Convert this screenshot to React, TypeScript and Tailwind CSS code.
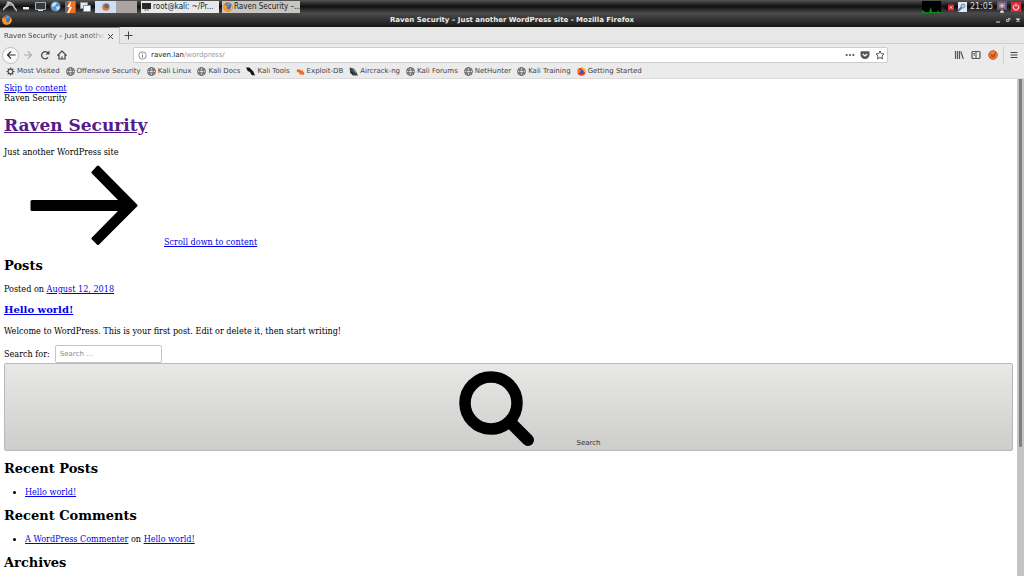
import type { ReactNode } from 'react'

const UI_FONT = "font-['DejaVu_Sans',sans-serif]"
const LINK = 'text-[#0000ee] underline'

function FirefoxIcon() {
  return (
    <svg viewBox="0 0 16 16" className="size-[10px] shrink-0">
      <circle cx="8" cy="8" r="7.5" fill="#e66a17" />
      <circle cx="8.5" cy="6.5" r="5" fill="#3f78c4" />
      <path d="M7 3q3-2 5 1q-3-1-4 1z" fill="#a8d3f5" />
      <path d="M1 4q2 1 4 1l3 2q-2 1-2 3q2 3 6 1q3-2 2-6q3 6-2 9.500q-6 3-10-1q-3-4-1-9.500z" fill="#f0962a" />
      <path d="M14 4q3 6-3 9q3-4 3-9z" fill="#ffd24a" />
    </svg>
  )
}

function GlobeIcon() {
  return (
    <svg viewBox="0 0 16 16" className="size-[9px] shrink-0" fill="none" stroke="#4c4c4c" strokeWidth="1.5">
      <circle cx="8" cy="8" r="7" />
      <ellipse cx="8" cy="8" rx="3.200" ry="7" />
      <path d="M1.500 5.500h13M1.500 10.500h13" />
    </svg>
  )
}

function GearIcon() {
  return (
    <svg viewBox="0 0 16 16" className="size-[9px] shrink-0" fill="none" stroke="#4c4c4c">
      <circle cx="8" cy="8" r="4.200" strokeWidth="2" />
      <path d="M8 1v2.500M8 12.500V15M1 8h2.500M12.500 8H15M3 3l2 2M11 11l2 2M13 3l-2 2M5 11l-2 2" strokeWidth="2" />
    </svg>
  )
}

function KaliToolsIcon() {
  return (
    <svg viewBox="0 0 16 16" className="size-[9px] shrink-0">
      <path d="M0 1l6 0l4 4l3 3l3 7l-6-1l-3-5l-4-2z" fill="#151515" />
    </svg>
  )
}

function ExploitIcon() {
  return (
    <svg viewBox="0 0 16 16" className="size-[9px] shrink-0">
      <path d="M1 5l5-1l3 2l3 0l1 3l2 1l-1 4l-4-1l-3 1l-1-4l-4-1z" fill="#ee6a22" />
    </svg>
  )
}

function AircrackIcon() {
  return (
    <svg viewBox="0 0 16 16" className="size-[9px] shrink-0">
      <path d="M1 1l8 2l4 6l3 6H7L2 10z" fill="#3a4246" />
      <path d="M6 4l5 1l2 7z" fill="#8a979b" />
      <path d="M3 9l4 1l1 4z" fill="#121616" />
    </svg>
  )
}

function QuantumIcon() {
  return (
    <svg viewBox="0 0 16 16" className="size-[9px] shrink-0">
      <circle cx="8" cy="8.500" r="7" fill="#f4352f" />
      <path d="M8 1q8 0 7.500 8q-3 1-7.500-3z" fill="#ffbd1f" />
      <circle cx="8" cy="8.500" r="4" fill="#2f55c9" />
      <path d="M1 2l6 4l-2 4L1 11z" fill="#ff7a1a" />
    </svg>
  )
}

const bookmarks: { label: string; icon: ReactNode }[] = [
  { label: 'Most Visited', icon: <GearIcon /> },
  { label: 'Offensive Security', icon: <GlobeIcon /> },
  { label: 'Kali Linux', icon: <GlobeIcon /> },
  { label: 'Kali Docs', icon: <GlobeIcon /> },
  { label: 'Kali Tools', icon: <KaliToolsIcon /> },
  { label: 'Exploit-DB', icon: <ExploitIcon /> },
  { label: 'Aircrack-ng', icon: <AircrackIcon /> },
  { label: 'Kali Forums', icon: <GlobeIcon /> },
  { label: 'NetHunter', icon: <GlobeIcon /> },
  { label: 'Kali Training', icon: <GlobeIcon /> },
  { label: 'Getting Started', icon: <QuantumIcon /> },
]

function Launchers() {
  return (
    <div className="flex items-center gap-1 pl-[3px]">
      <button aria-label="Applications">
        <svg viewBox="0 0 14 11" className="h-[11px] w-[14px]" fill="none" stroke="#b9bec2">
          <path d="M0 9q4-6 8-7M4 1q4 0 6 3q1 3 4 6" strokeWidth="1.600" />
          <path d="M2 7q4-4 9-3M3 3q3-1 6 0" strokeWidth="1" />
        </svg>
      </button>
      <button aria-label="Minimize windows">
        <svg viewBox="0 0 10 11" className="h-[11px] w-[10px]">
          <path d="M1 5h7v4H1z" fill="#111" />
          <path d="M2 6h6v2.500H2z" fill="#eee" />
        </svg>
      </button>
      <button aria-label="Terminal">
        <svg viewBox="0 0 11 11" className="size-[11px]">
          <path d="M.5 1.500h10v7H.5z" fill="#333b3f" stroke="#a6abad" />
          <path d="M3 9.500h5" stroke="#ddd" />
        </svg>
      </button>
      <button aria-label="Web browser">
        <svg viewBox="0 0 11 11" className="size-[11px]">
          <circle cx="5.500" cy="5.500" r="5" fill="#5e95cd" />
          <path d="M2 3q3-3 5-1l-2 3l-3 1zM6 6l3-1l1 2l-3 3z" fill="#c5dff4" />
        </svg>
      </button>
      <button aria-label="Burp Suite">
        <svg viewBox="0 0 11 12" className="h-3 w-[11px]">
          <path d="M0 0h11v12H0z" fill="#6e6a68" />
          <path d="M3 0h7v12H3z" fill="#f36f21" />
          <path d="M6 0L2 6h3l-3 6h2l3-6H5z" fill="#fff" />
        </svg>
      </button>
      <button aria-label="Show windows">
        <svg viewBox="0 0 11 10" className="h-[10px] w-[11px]">
          <path d="M.5.5h7v6h-7z" fill="#dfe6ec" stroke="#8b98a3" />
          <path d="M3.500 3.500h7v6h-7z" fill="#f8fafb" stroke="#7f95a9" />
        </svg>
      </button>
    </div>
  )
}

function Tray() {
  return (
    <div className="ml-auto flex items-center gap-[3px] pr-[3px] text-[8px] text-[#d8d8d8]">
      <svg viewBox="0 0 19 12" className="h-3 w-[19px]">
        <path d="M0 0h19v12H0z" fill="#000" />
        <path d="M0 12v-2l1-1l2 2h4l1-3l1-2l1 5h5l1-2l1 2h2v1z" fill="#0d8a12" />
      </svg>
      <svg viewBox="0 0 10 10" className="size-[10px]">
        <path d="M0 4h2l2-3v8L2 7H0z" fill="#111" />
        <path d="M4 2.500h6v6H4z" fill="#dc2c36" />
        <path d="M6 4.500l2 2m0-2l-2 2" stroke="#fff" strokeWidth=".8" />
      </svg>
      <svg viewBox="0 0 10 10" className="size-[10px]">
        <path d="M1 0h9v10H1z" fill="#e4e8ec" />
        <path d="M1 9l4-4" stroke="#3b6fa8" strokeWidth="2" />
        <circle cx="6" cy="4" r="2" fill="#b9d3ec" stroke="#6a8cae" />
      </svg>
      <time className={UI_FONT}>21:05</time>
      <svg viewBox="0 0 12 12" className="size-3">
        <path d="M1 0h10v9H1z" fill="#67558a" />
        <path d="M3 2h6v5H3z" fill="#8d7ba5" />
        <path d="M6 2l1 2l2 .5l-2 1l-1 2l-1-2l-2-1l2-.5z" fill="#f2c54a" />
        <path d="M4 11h4M6 9v2" stroke="#ddd" strokeWidth="1.500" />
      </svg>
      <button aria-label="Log out">
        <svg viewBox="0 0 10 10" className="size-[10px]">
          <path d="M0 0h10v10H0z" fill="#dc2c36" />
          <path d="M3.500 3a2.700 2.700 0 1 0 3 0M5 1.500v3" fill="none" stroke="#fff" />
        </svg>
      </button>
    </div>
  )
}

function Taskbar() {
  return (
    <header className="flex h-[13px] shrink-0 items-center bg-linear-to-b from-[#555] via-[#111] to-[#4a4a4a] font-['DejaVu_Sans_Condensed','DejaVu_Sans',sans-serif]">
      <Launchers />
      <div className="ml-1 flex h-3">
        <button aria-label="Workspace 1" className="flex w-[21px] items-center justify-center bg-[#cfdff5]">
          <svg viewBox="0 0 16 16" className="size-2">
            <circle cx="8" cy="8" r="7.500" fill="#e8761f" />
            <circle cx="9" cy="6" r="4.500" fill="#3c70bb" />
          </svg>
        </button>
        <button aria-label="Workspace 2" className="w-[21px] bg-[#aaa5a2]" />
      </div>
      <button className="ml-1 flex h-3 w-[78px] items-center gap-[2px] bg-[#e9e8e7] pl-px text-[8px] whitespace-nowrap text-[#222]">
        <svg viewBox="0 0 9 9" className="size-[9px] shrink-0">
          <path d="M0 1h9v6H0z" fill="#252a2c" />
          <path d="M2 8h5" stroke="#777" />
        </svg>
        root@kali: ~/Pr...
      </button>
      <button className="ml-[3px] flex h-3 w-[78px] items-center gap-px bg-[#c9c5c2] pl-px text-[8px] whitespace-nowrap text-[#222]">
        <FirefoxIcon />
        Raven Security –...
      </button>
      <Tray />
    </header>
  )
}

function TitleBar() {
  return (
    <div className="grid h-[14px] shrink-0 grid-cols-[1fr_auto_1fr] items-center bg-linear-to-b from-[#4c4c4c] to-[#191919] px-[2px]">
      <FirefoxIcon />
      <h1 className="text-[7px] font-bold text-[#ececec]">Raven Security – Just another WordPress site - Mozilla Firefox</h1>
      <div className="flex justify-end gap-1 pr-px">
        <button aria-label="Minimize">
          <svg viewBox="0 0 6 6" className="size-[6px]"><path d="M1 5h4" stroke="#ddd" /></svg>
        </button>
        <button aria-label="Restore">
          <svg viewBox="0 0 6 6" className="size-[6px]" fill="none" stroke="#bbb"><path d="M1.500 2.500h2v2h-2zM3 1.500h2v2" /></svg>
        </button>
        <button aria-label="Close">
          <svg viewBox="0 0 6 6" className="size-[6px]"><path d="M1.500 1.500l3 3m0-3l-3 3" stroke="#eee" strokeWidth="1.400" /></svg>
        </button>
      </div>
    </div>
  )
}

function TabStrip() {
  return (
    <div className="flex h-[17px] shrink-0 border-b border-[#cfcfcd] bg-[#e7e7e5]">
      <div className="-mb-px flex w-[120px] items-center justify-between border-t border-r border-t-[#4a90d9] border-r-[#c8c8c6] bg-[#ebebeb] pr-[5px] pl-1">
        <span className="w-[101px] overflow-hidden mask-r-from-85% text-[7px] whitespace-nowrap text-[#444]">Raven Security – Just anothe</span>
        <button aria-label="Close tab">
          <svg viewBox="0 0 7 7" className="size-[7px]"><path d="M1 1l5 5m0-5l-5 5" stroke="#444" /></svg>
        </button>
      </div>
      <button aria-label="New tab" className="ml-1">
        <svg viewBox="0 0 9 9" className="size-[9px]"><path d="M4.500.5v8M.5 4.500h8" stroke="#444" /></svg>
      </button>
    </div>
  )
}

function NavBar() {
  return (
    <nav className="flex h-[22px] shrink-0 items-center bg-[#ebebeb] pr-[5px] pl-[2px]">
      <button aria-label="Back" className="flex size-[17px] items-center justify-center rounded-full border border-[#bdbdbd] bg-[#fafafa]">
        <svg viewBox="0 0 10 10" className="size-[10px]" fill="none" stroke="#333" strokeWidth="1.200"><path d="M9.500 5H1.500M5 1.500L1.500 5L5 8.500" /></svg>
      </button>
      <button aria-label="Forward" disabled className="ml-1">
        <svg viewBox="0 0 10 10" className="size-[10px]" fill="none" stroke="#b0b0b0" strokeWidth="1.200"><path d="M1 5h7.500M5 1.500L8.500 5L5 8.500" /></svg>
      </button>
      <button aria-label="Reload" className="ml-[7px]">
        <svg viewBox="0 0 10 10" className="size-[10px]"><path d="M8 7.500A3.600 3.600 0 1 1 8 3" fill="none" stroke="#444" strokeWidth="1.300" /><path d="M9.500.5v4h-4z" fill="#444" /></svg>
      </button>
      <button aria-label="Home" className="ml-[7px]">
        <svg viewBox="0 0 10 10" className="size-[10px]" fill="none" stroke="#444" strokeWidth="1.200"><path d="M.5 5.500L5 1l4.500 4.500M2 5v4h6V5M5 9V6.500" /></svg>
      </button>
      <div className="ml-[66px] flex h-4 flex-1 items-center rounded-[2px] border border-[#ccc] bg-white pr-[2px] pl-1">
        <svg viewBox="0 0 9 9" className="size-[9px]" fill="none" stroke="#777"><circle cx="4.500" cy="4.500" r="3.700" strokeWidth=".8" /><path d="M4.500 4v2.500M4.500 2.300v1" /></svg>
        <label className="relative ml-1 flex flex-1 items-center text-[7px] text-[#222]">
          <input aria-label="Address" defaultValue="raven.lan/wordpress/" className="w-full bg-transparent text-transparent outline-none" />
          <span className="pointer-events-none absolute left-0">raven.lan<span className="text-[#999]">/wordpress/</span></span>
        </label>
        <div className="flex items-center gap-[5px]">
          <button aria-label="Page actions">
            <svg viewBox="0 0 10 10" className="size-[10px]" fill="#555"><circle cx="1.700" cy="5" r="1.100" /><circle cx="5" cy="5" r="1.100" /><circle cx="8.300" cy="5" r="1.100" /></svg>
          </button>
          <button aria-label="Save to Pocket">
            <svg viewBox="0 0 10 10" className="size-[10px]"><path d="M1.500 1.200h7q1 0 1 1v2.300a4.500 4.500 0 0 1-9 0V2.200q0-1 1-1z" fill="#555" /><path d="M2.800 4L5 6l2.200-2" fill="none" stroke="#fff" strokeWidth="1.200" /></svg>
          </button>
          <button aria-label="Bookmark this page">
            <svg viewBox="0 0 10 10" className="size-[10px]"><path d="M5 1l1.200 2.600l2.800.4l-2 2l.5 2.900L5 7.500L2.500 8.900L3 6L1 4l2.800-.4z" fill="none" stroke="#555" strokeLinejoin="round" /></svg>
          </button>
        </div>
      </div>
      <div className="ml-[66px] flex items-center gap-[7px]">
        <button aria-label="Library">
          <svg viewBox="0 0 10 10" className="size-[10px]" stroke="#555" strokeWidth="1.200"><path d="M1.500 1v8M3.500 1v8M5.500 1v8M6.800 1.500L9.300 9" /></svg>
        </button>
        <button aria-label="Sidebars">
          <svg viewBox="0 0 10 10" className="size-[10px]" fill="none" stroke="#555"><rect x="1" y="1.500" width="8" height="7" rx="1" strokeWidth="1.200" /><path d="M5 2v6M2.500 3.500H4M2.500 5H4" /></svg>
        </button>
        <button aria-label="FoxyProxy">
          <svg viewBox="0 0 10 10" className="size-[10px]"><circle cx="5" cy="5" r="4.300" fill="#e8902e" stroke="#c94f4a" /><path d="M2 3l3 2l3-2l-1 4l-2 1l-2-1z" fill="#cf4d17" /><path d="M2 8l6-6" stroke="#d73b35" /></svg>
        </button>
      </div>
      <span className="ml-[5px] h-[18px] w-px bg-[#d4d4d4]" />
      <button aria-label="Menu" className="ml-[5px]">
        <svg viewBox="0 0 10 10" className="size-[10px]" stroke="#444" strokeWidth="1.200"><path d="M1.500 2.500h7M1.500 5h7M1.500 7.500h7" /></svg>
      </button>
    </nav>
  )
}

function BookmarksBar() {
  return (
    <ul className="flex h-[13px] shrink-0 items-start gap-[6px] border-b border-[#dadada] bg-[#ebebeb] pl-[6px] text-[7px] leading-[10px] whitespace-nowrap text-[#444]">
      {bookmarks.map((b) => (
        <li key={b.label}>
          <a href="#" className="flex items-center gap-[2px]">
            {b.icon}
            {b.label}
          </a>
        </li>
      ))}
    </ul>
  )
}

function BlogPage() {
  return (
    <main className="min-w-0 flex-1 px-1 pt-1 font-['DejaVu_Serif_Condensed','DejaVu_Serif',serif] text-[9px] leading-[10px] text-black [&_:is(h1,h2,h3)]:font-['DejaVu_Serif',serif]">
      <a href="#content" className={`block ${LINK}`}>Skip to content</a>
      <p>Raven Security</p>
      <h1 className="mt-3 text-[17px] leading-5 font-bold">
        <a href="#" className="text-[#551a8b] underline">Raven Security</a>
      </h1>
      <p className="mt-3">Just another WordPress site</p>
      <a href="#content" className={`mt-2 flex items-baseline ${LINK}`}>
        <svg viewBox="0 0 160 80" className="h-20 w-40" stroke="#000" strokeWidth="3" strokeLinejoin="round">
          <path d="M28 36.500H117.500L89 7.500L94 2L132 40.500L94 78.500L89 73.500L117.500 44.500H28z" />
        </svg>
        Scroll down to content
      </a>
      <h2 className="mt-[11px] text-[13px] leading-4 font-bold">Posts</h2>
      <p className="mt-[10px]">Posted on <a href="#" className={LINK}>August 12, 2018</a></p>
      <h3 className="mt-[10px] text-[10px] leading-3 font-bold"><a href="#" className={LINK}>Hello world!</a></h3>
      <p className="mt-[10px]">Welcome to WordPress. This is your first post. Edit or delete it, then start writing!</p>
      <form className="mt-[9px]" onSubmit={(e) => e.preventDefault()}>
        <div className="flex items-center gap-[5px]">
          <label htmlFor="search">Search for:</label>
          <input id="search" type="search" placeholder="Search …" className={`h-[18px] w-[107px] rounded-[2px] border border-[#c4c4c4] bg-white px-1 text-[7px] placeholder:text-[#8a8a8a] ${UI_FONT}`} />
        </div>
        <button className={`flex w-full items-end justify-center rounded-[2px] border border-[#b8b8b6] bg-linear-to-b from-[#e8e8e7] to-[#cdcdcb] pt-1 pb-[2px] text-[7px] leading-[9px] text-[#333] ${UI_FONT}`}>
          <svg viewBox="0 0 160 80" className="h-20 w-40" fill="none" stroke="#000">
            <circle cx="75" cy="35" r="26" strokeWidth="11.500" />
            <path d="M95 55l17 17" strokeWidth="12" strokeLinecap="round" />
          </svg>
          Search
        </button>
      </form>
      <h2 className="mt-[10px] text-[13px] leading-4 font-bold">Recent Posts</h2>
      <ul className="mt-[10px] list-disc pl-[21px]">
        <li><a href="#" className={LINK}>Hello world!</a></li>
      </ul>
      <h2 className="mt-[11px] text-[13px] leading-4 font-bold">Recent Comments</h2>
      <ul className="mt-[10px] list-disc pl-[21px]">
        <li><a href="#" className={LINK}>A WordPress Commenter</a> on <a href="#" className={LINK}>Hello world!</a></li>
      </ul>
      <h2 className="mt-[11px] text-[13px] leading-4 font-bold">Archives</h2>
    </main>
  )
}

export default function App() {
  return (
    <div className={`flex h-screen flex-col overflow-hidden bg-white ${UI_FONT}`}>
      <Taskbar />
      <TitleBar />
      <TabStrip />
      <NavBar />
      <BookmarksBar />
      <div className="flex min-h-0 flex-1">
        <BlogPage />
        <div className="w-[7px] bg-[#c1c5c4] px-[2px]">
          <div className="h-[74%] rounded-b-full bg-[#7b7f7e]" />
        </div>
      </div>
    </div>
  )
}
